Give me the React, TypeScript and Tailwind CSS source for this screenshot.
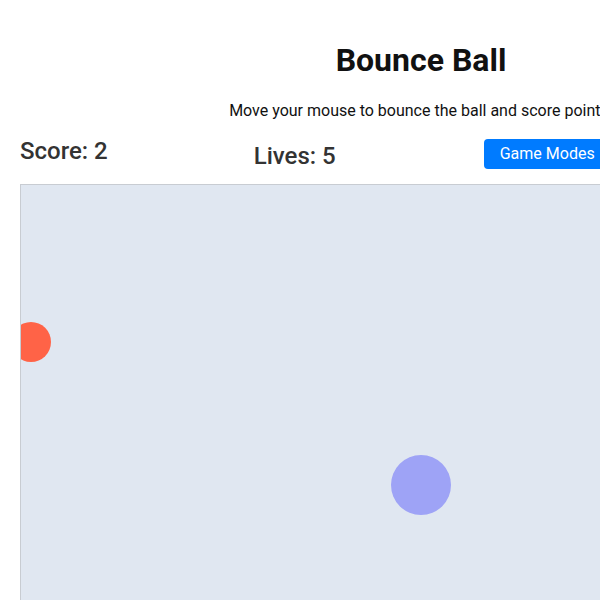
export default function App() {
  return (
    <div className="w-[600px] h-[600px] overflow-hidden bg-white" style={{ fontFamily: "Roboto, 'Liberation Sans', sans-serif" }}>
      <div className="w-[842px] px-5">
        {/* Header */}
        <h1 className="pt-[40px] text-center text-[32px] font-bold leading-[40px] text-[#111]">
          Bounce Ball
        </h1>
        <p className="mt-[21px] whitespace-nowrap text-center text-base leading-5 text-[#111]">
          Move your mouse to bounce the ball and score points!
        </p>

        {/* Stats row */}
        <div className="mt-[16px] flex items-start gap-[146px] whitespace-nowrap">
          <h2 className="shrink-0 text-[24px] font-medium leading-7 text-[#333]">Score: 2</h2>
          <h2 className="mt-[5px] shrink-0 text-[24px] font-medium leading-7 text-[#333]">Lives: 5</h2>
          <button className="ml-[2px] mt-[2px] h-[30px] shrink-0 rounded bg-[#007bff] px-4 text-base text-white">Game Modes</button>
          <button className="mt-[2px] h-[30px] shrink-0 rounded bg-[#007bff] px-4 text-base text-white">Restart</button>
        </div>

        {/* Game area */}
        <div className="relative mt-[14px] h-[500px] overflow-hidden border border-[#c8ccd2] bg-[#e0e7f1]">
          <div className="absolute left-[-10px] top-[137px] h-10 w-10 rounded-full bg-[#ff6347]" />
          <div className="absolute left-[370px] top-[270px] h-[60px] w-[60px] rounded-full bg-[#9ea3f6]" />
        </div>
      </div>
    </div>
  );
}
